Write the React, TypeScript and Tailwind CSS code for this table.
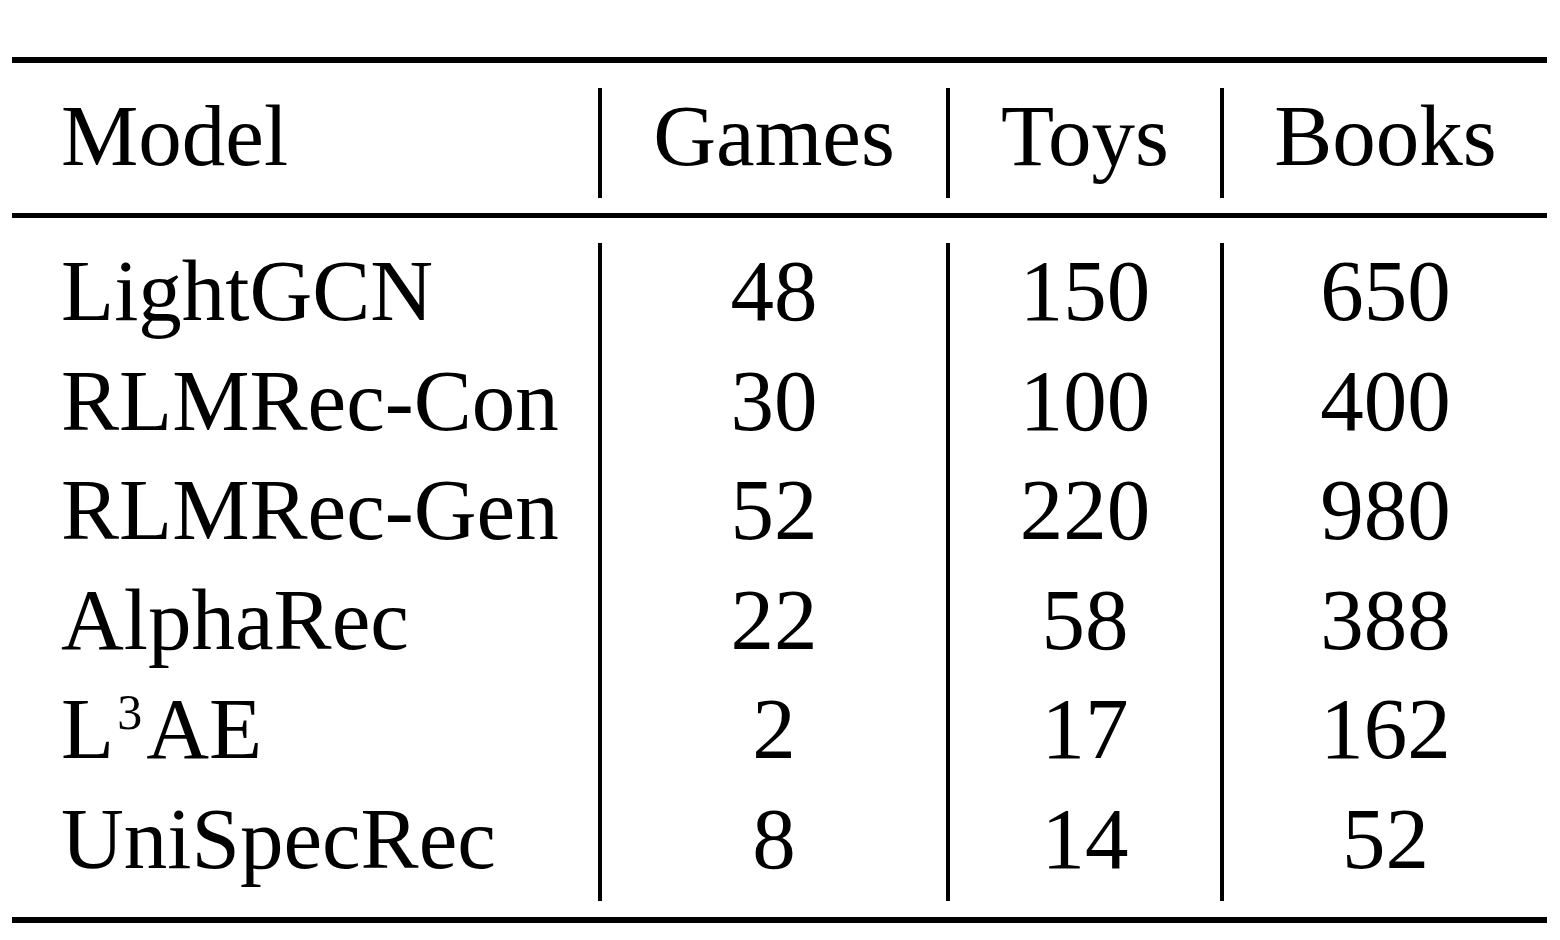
const columns = ['Games', 'Toys', 'Books']

const rows: { model: React.ReactNode; values: number[] }[] = [
  { model: 'LightGCN', values: [48, 150, 650] },
  { model: 'RLMRec-Con', values: [30, 100, 400] },
  { model: 'RLMRec-Gen', values: [52, 220, 980] },
  { model: 'AlphaRec', values: [22, 58, 388] },
  {
    model: (
      <>
        L<span className="ml-[3px] mr-[4px] text-[50px] leading-none align-[29px]">3</span>AE
      </>
    ),
    values: [2, 17, 162],
  },
  { model: 'UniSpecRec', values: [8, 14, 52] },
]

// booktabs style table: top/mid/bottom rules, vertical separators between columns
export default function App() {
  return (
    <div className="min-h-screen bg-white pt-[57px] pl-[12px] text-black font-['Liberation_Serif',serif] text-[87px] leading-[95px]">
      <div className="w-[1535px] border-y-[6px] border-black">
        {/* header */}
        <div className="grid grid-cols-[586px_348px_274px_327px] pt-[25px] pb-[15px]">
          <div className="h-[110px] pl-[49px]">Model</div>
          {columns.map((c) => (
            <div key={c} className="h-[110px] border-l-[4px] border-black text-center">
              {c}
            </div>
          ))}
        </div>

        {/* body */}
        <div className="grid grid-cols-[586px_348px_274px_327px] border-t-[5px] border-black pt-[25px] pb-[16px]">
          <div className="flex flex-col pl-[49px]">
            {rows.map((r, i) => (
              <div key={i} className="h-[109.6px] whitespace-nowrap">
                {r.model}
              </div>
            ))}
          </div>
          {columns.map((c, ci) => (
            <div key={c} className="flex flex-col border-l-[4px] border-black text-center">
              {rows.map((r, i) => (
                <div key={i} className="h-[109.6px]">
                  {r.values[ci]}
                </div>
              ))}
            </div>
          ))}
        </div>
      </div>
    </div>
  )
}
